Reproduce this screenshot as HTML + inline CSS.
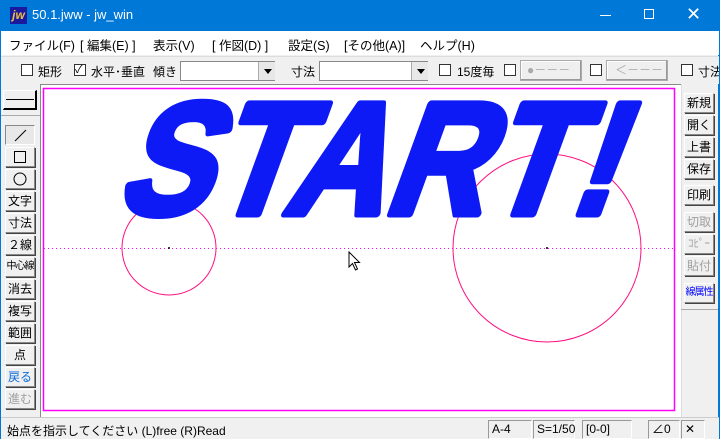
<!DOCTYPE html>
<html><head><meta charset="utf-8"><style>
*{margin:0;padding:0;box-sizing:border-box}
body{width:720px;height:439px;overflow:hidden;background:#f0f0f0;font-family:"Liberation Sans","Noto Sans CJK JP",sans-serif;font-size:12px;color:#000;position:relative;white-space:nowrap}
.a{position:absolute}
.title{left:0;top:0;width:720px;height:31px;background:#0078d7;color:#fff;font-size:13px}
.menu{left:1px;top:31px;width:718px;height:24px;background:#fff;font-size:12.5px}
.menu span{position:absolute;top:4px}
.tb{top:56px;height:28px;left:1px;width:718px;background:#f0f0f0;border-top:1px solid #ddd;overflow:hidden}
.cb{position:absolute;width:12px;height:12px;border:1px solid #333;background:#fff;top:7px}
.lbl{position:absolute;top:6px;font-size:12px}
.combo{position:absolute;top:4px;height:20px;background:#fff;border:1px solid #888;border-right:none}
.combo i{position:absolute;right:0;top:0;width:17px;height:18px;background:#e8e8e8;border-left:1px solid #aaa}
.combo i:after{content:"";position:absolute;left:5px;top:7px;border:4px solid transparent;border-top:5px solid #000;border-bottom:none}
.gb{position:absolute;top:3px;height:21px;border:1px solid #aaa;background:#efefef;color:#aaa;font-size:12px;box-shadow:inset -1px -1px #999,inset 1px 1px #fff}
.lb,.rb{position:absolute;width:30px;height:20px;background:#f0f0f0;border:1px solid #fff;border-right-color:#888;border-bottom-color:#888;box-shadow:1px 1px #444;text-align:center;font-size:12px;line-height:18px;overflow:hidden}
.lb{left:5px}.rb{left:684px}
.sm{font-size:10px;letter-spacing:-1px}
.dis{color:#a0a0a0}
.status{left:1px;top:417px;width:718px;height:22px;background:#f0f0f0;border-top:1px solid #ccc;font-size:12px}
.sp{position:absolute;top:2px;height:19px;border:1px solid #fff;border-left-color:#999;border-top-color:#999;line-height:17px;padding-left:3px}
</style></head><body>
<div class="a" style="left:0;top:0;width:1px;height:439px;background:#0078d7"></div>
<div class="a" style="left:718px;top:0;width:2px;height:439px;background:#0078d7"></div>
<div class="a title">
 <div class="a" style="left:10px;top:7px;width:17px;height:17px;background:#1a1aa0;color:#f0c040;font-style:italic;font-weight:bold;font-size:12px;line-height:16px;text-align:center">jw</div>
 <div class="a" style="left:32px;top:7px">50.1.jww - jw_win</div>
 <div class="a" style="left:600px;top:15px;width:11px;height:1px;background:#fff"></div>
 <div class="a" style="left:644px;top:9px;width:10px;height:10px;border:1px solid #fff"></div>
 <div class="a" style="left:686px;top:3px;font-size:18px;line-height:22px">✕</div>
</div>
<div class="a menu">
 <span style="left:8px">ファイル(F)</span><span style="left:79px">[ 編集(E) ]</span><span style="left:152px">表示(V)</span><span style="left:211px">[ 作図(D) ]</span><span style="left:287px">設定(S)</span><span style="left:343px">[その他(A)]</span><span style="left:419px">ヘルプ(H)</span>
</div>
<div class="a tb">
 <div class="cb" style="left:20px"></div><div class="lbl" style="left:37px">矩形</div>
 <div class="cb" style="left:73px;font-size:11px;line-height:10px">✓</div><div class="lbl" style="left:90px">水平･垂直</div>
 <div class="lbl" style="left:152px">傾き</div>
 <div class="combo" style="left:179px;width:95px"><i></i></div>
 <div class="lbl" style="left:290px">寸法</div>
 <div class="combo" style="left:318px;width:109px"><i></i></div>
 <div class="cb" style="left:438px"></div><div class="lbl" style="left:456px">15度毎</div>
 <div class="cb" style="left:503px"></div>
 <div class="gb" style="left:519px;width:62px;padding-left:6px;line-height:18px">●－－－</div>
 <div class="cb" style="left:589px"></div>
 <div class="gb" style="left:605px;width:62px;padding-left:8px;line-height:18px">＜－－－</div>
 <div class="cb" style="left:680px"></div><div class="lbl" style="left:697px">寸法</div>
</div>
<div class="a" style="left:1px;top:84px;width:39px;height:333px;background:#f0f0f0"></div>
<div class="a" style="left:3px;top:90px;width:34px;height:20px;background:#f0f0f0;border:1px solid #fff;border-right:2px solid #000;border-bottom:2px solid #000"><div class="a" style="left:2px;top:8px;width:28px;height:1px;background:#000"></div></div>
<div class="a" style="left:1px;top:115px;width:39px;height:1px;background:#aaa"></div>
<div class="lb" style="top:125px;background:#e8e8e8;border-color:#888 #fff #fff #888;box-shadow:none"><svg width="28" height="18"><line x1="9" y1="15" x2="20" y2="4" stroke="#000"/></svg></div>
<div class="lb" style="top:147px"><svg width="28" height="18"><rect x="8.5" y="3.5" width="11" height="11" fill="none" stroke="#000"/></svg></div>
<div class="lb" style="top:169px"><svg width="28" height="18"><circle cx="14" cy="9" r="6" fill="none" stroke="#000"/></svg></div>
<div class="lb" style="top:191px">文字</div>
<div class="lb" style="top:213px">寸法</div>
<div class="lb" style="top:235px">２線</div>
<div class="lb sm" style="top:257px">中心線</div>
<div class="lb" style="top:279px">消去</div>
<div class="lb" style="top:301px">複写</div>
<div class="lb" style="top:323px">範囲</div>
<div class="lb" style="top:345px">点</div>
<div class="lb" style="top:367px;color:#0a6ad8">戻る</div>
<div class="lb dis" style="top:389px">進む</div>
<div class="a" style="left:40px;top:84px;width:641px;height:333px;background:#fff;border-left:1px solid #888;border-top:1px solid #888"></div>
<svg class="a" style="left:0;top:0" width="720" height="439">
 <rect x="43.5" y="88.5" width="631" height="322" fill="none" stroke="#ff00ff" stroke-width="1.5"/>
 <line x1="44" y1="248.5" x2="674" y2="248.5" stroke="#ff00ff" stroke-dasharray="1 3"/>
 <circle cx="169" cy="248" r="47" fill="none" stroke="#ff1080"/>
 <circle cx="547" cy="248" r="94" fill="none" stroke="#ff1080"/>
 <circle cx="169" cy="248" r="1" fill="#000"/><circle cx="547" cy="248" r="1" fill="#000"/>
 <g transform="translate(114,214) skewX(-20)">
  <text x="0" y="0" font-family="Liberation Sans" font-weight="bold" font-size="160" fill="#0d1af5" stroke="#0d1af5" stroke-width="7" stroke-linejoin="round" textLength="498" lengthAdjust="spacingAndGlyphs">START!</text>
 </g>
 <path d="M349 252 L349 267 L352.5 263.5 L355.5 270 L357.5 269 L354.5 262.5 L359.5 262.5 Z" fill="#fff" stroke="#000" stroke-width="1"/>
</svg>
<div class="a" style="left:681px;top:84px;width:37px;height:333px;background:#f0f0f0;border-left:1px solid #ddd"></div>
<div class="rb" style="top:93px">新規</div>
<div class="rb" style="top:115px">開く</div>
<div class="rb" style="top:137px">上書</div>
<div class="rb" style="top:159px">保存</div>
<div class="rb" style="top:185px">印刷</div>
<div class="rb dis" style="top:212px">切取</div>
<div class="rb dis" style="top:234px;font-size:11px">ｺﾋﾟｰ</div>
<div class="rb dis" style="top:256px">貼付</div>
<div class="rb sm" style="top:283px;color:#0000ff">線属性</div>
<div class="a" style="left:681px;top:309px;width:37px;height:1px;background:#aaa"></div>
<div class="a status">
 <div class="a" style="left:6px;top:4px">始点を指示してください (L)free (R)Read</div>
 <div class="sp" style="left:487px;width:44px">A-4</div>
 <div class="sp" style="left:532px;width:42px">S=1/50</div>
 <div class="sp" style="left:581px;width:50px">[0-0]</div>
 <div class="sp" style="left:647px;width:32px">∠0</div>
 <div class="sp" style="left:680px;width:24px">✕</div>
</div>
</body></html>
